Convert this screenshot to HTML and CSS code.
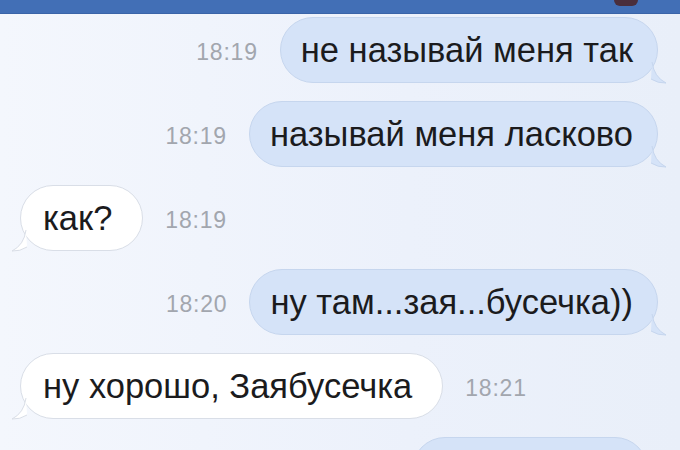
FILE: index.html
```html
<!DOCTYPE html>
<html lang="ru">
<head>
    <meta charset="UTF-8">
    <meta name="viewport" content="width=device-width, initial-scale=1.0">
    <title>Сообщения</title>
    <link rel="stylesheet" href="styles.css">
</head>
<body>
    <div class="topbar">
        <span class="topbar-avatar"></span>
    </div>

    <div class="chat">
        <div class="row row-out">
            <span class="time">18:19</span>
            <div class="bubble bubble-out">не называй меня так
                <svg class="tail" width="18" height="22" viewBox="0 0 18 22"><path d="M1 0 Q3 15 15 21 Q7 21.5 0 17" /></svg>
            </div>
        </div>

        <div class="row row-out">
            <span class="time">18:19</span>
            <div class="bubble bubble-out">называй меня ласково
                <svg class="tail" width="18" height="22" viewBox="0 0 18 22"><path d="M1 0 Q3 15 15 21 Q7 21.5 0 17" /></svg>
            </div>
        </div>

        <div class="row row-in">
            <div class="bubble bubble-in">как?
                <svg class="tail" width="18" height="22" viewBox="0 0 18 22"><path d="M17 0 Q15 15 3 21 Q11 21.5 18 17" /></svg>
            </div>
            <span class="time">18:19</span>
        </div>

        <div class="row row-out">
            <span class="time">18:20</span>
            <div class="bubble bubble-out">ну там...зая...бусечка))
                <svg class="tail" width="18" height="22" viewBox="0 0 18 22"><path d="M1 0 Q3 15 15 21 Q7 21.5 0 17" /></svg>
            </div>
        </div>

        <div class="row row-in">
            <div class="bubble bubble-in">ну хорошо, Заябусечка
                <svg class="tail" width="18" height="22" viewBox="0 0 18 22"><path d="M17 0 Q15 15 3 21 Q11 21.5 18 17" /></svg>
            </div>
            <span class="time">18:21</span>
        </div>

        <div class="row row-out">
            <div class="bubble bubble-out bubble-cut"></div>
        </div>
    </div>
</body>
</html>
```

FILE: styles.css
```css
html, body {
    overflow: hidden;
}

body {
    margin: 0;
    padding: 0;
    width: 680px;
    height: 450px;
    font-family: "Liberation Sans", Arial, sans-serif;
    background: linear-gradient(to right, #f4f7fd, #ecf1fb 60%, #e9eff9);
    color: #1b1b1d;
}

.topbar {
    height: 13px;
    background-color: #426fb6;
    border-bottom: 1px solid #3a64a8;
    position: relative;
}

.topbar-avatar {
    position: absolute;
    right: 42px;
    top: 0;
    width: 24px;
    height: 6px;
    border-radius: 0 0 10px 10px;
    background-color: #4a2e3c;
}

.chat {
    display: flex;
    flex-direction: column;
    gap: 18px;
    height: 436px;
    overflow: hidden;
    box-sizing: border-box;
    padding: 3px 22px 0 20px;
}

.row {
    display: flex;
    flex-shrink: 0;
    align-items: center;
    gap: 22px;
}

.row-out {
    justify-content: flex-end;
}

.row-in {
    justify-content: flex-start;
}

.time {
    font-size: 23px;
    letter-spacing: 0.8px;
    color: #a2a6ae;
    padding-top: 4px;
}

.bubble {
    position: relative;
    height: 66px;
    line-height: 64px;
    font-size: 34.5px;
    padding: 0 24px 0 20px;
    border-radius: 33px;
    box-sizing: border-box;
    white-space: nowrap;
}

.bubble-out {
    background-color: #d5e3f8;
    border: 1px solid #c6d6ee;
}

.bubble-in {
    background-color: #ffffff;
    border: 1px solid #d9dee7;
    padding: 0 30px 0 22px;
}

.bubble-cut {
    width: 236px;
    margin-right: 10px;
}

.tail {
    position: absolute;
    bottom: -2px;
    overflow: visible;
}

.bubble-out .tail {
    right: -12px;
}

.bubble-out .tail path {
    fill: #d5e3f8;
    stroke: #c6d6ee;
    stroke-width: 1;
}

.bubble-in .tail {
    left: -12px;
}

.bubble-in .tail path {
    fill: #ffffff;
    stroke: #d9dee7;
    stroke-width: 1;
}
```
